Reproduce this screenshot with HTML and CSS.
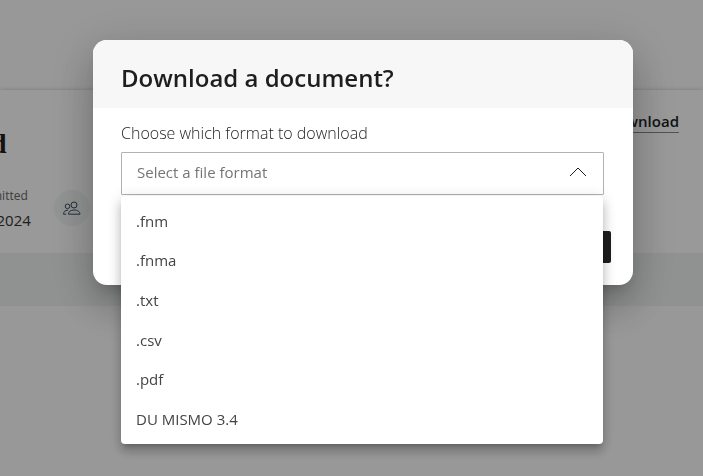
FILE: index.html
```html
<!DOCTYPE html>
<html lang="en">
<head>
<meta charset="UTF-8">
<meta name="viewport" content="width=device-width, initial-scale=1.0">
<title>Download a document</title>
<link rel="stylesheet" href="styles.css">
</head>
<body>
<main class="page">
  <section class="loan-card">
    <div class="loan-body">
      <div class="loan-info">
        <h1 class="loan-name">d</h1>
        <div class="loan-row">
          <div class="submitted">
            <span class="submitted-label">mitted</span>
            <span class="submitted-date">/2024</span>
          </div>
          <div class="people">
            <svg width="18" height="14" viewBox="0 0 18 14" fill="none" stroke="currentColor">
              <circle cx="11" cy="4" r="3"/>
              <circle cx="4.5" cy="5.3" r="2.3"/>
              <path d="M5.5 13.2c0-2.5 2-4.2 5.5-4.2s6 1.700 6 4.200zM.6 13.200c0-2.600 1.300-4 4.400-4M.6 13.200h2.600"/>
            </svg>
          </div>
        </div>
      </div>
      <a class="download-link" href="#">Download</a>
    </div>
    <div class="loan-footer"></div>
  </section>
</main>

<div class="overlay">
  <div class="modal" role="dialog" aria-labelledby="modalTitle">
    <div class="modal-header">
      <h2 id="modalTitle">Download a document?</h2>
    </div>
    <form class="modal-body">
      <label for="format">Choose which format to download</label>
      <div class="select-box">
        <select id="format">
          <option value="">Select a file format</option>
        </select>
        <svg class="chevron" width="18" height="10" viewBox="0 0 18 10" fill="none" stroke="currentColor">
          <path d="M1 9l8-8 8 8"/>
        </svg>
        <ul class="menu" role="listbox">
          <li role="option">.fnm</li>
          <li role="option">.fnma</li>
          <li role="option">.txt</li>
          <li role="option">.csv</li>
          <li role="option">.pdf</li>
          <li role="option">DU MISMO 3.4</li>
        </ul>
      </div>
    </form>
    <div class="modal-footer">
      <button type="button" aria-label="Download"></button>
    </div>
  </div>
</div>
</body>
</html>
```
FILE: styles.css
```css
* {
  box-sizing: border-box;
}

body {
  margin: 0;
  font-family: "Open Sans", sans-serif;
  font-size: 15px;
  color: #1e1e1e;
  background-color: #fdfdfd;
  overflow: hidden;
}

.page {
  padding-top: 90px;
}

.loan-card {
  background-color: #fff;
  box-shadow: 0 1px 5px rgba(0, 0, 0, 0.3);
}

.loan-body {
  display: flex;
  justify-content: space-between;
  align-items: flex-start;
  height: 163px;
  padding: 20px 24px 0 0;
}

.loan-info {
  margin-left: -9px;
}

.loan-name {
  margin: 16px 0 24px;
  font-family: "Liberation Serif", serif;
  font-size: 28px;
  line-height: 36px;
}

.loan-row {
  display: flex;
  align-items: center;
  gap: 23px;
}

.submitted {
  display: flex;
  flex-direction: column;
  gap: 4px;
}

.submitted-label {
  font-size: 12px;
  line-height: 20px;
  color: #666;
}

.submitted-date {
  line-height: 20px;
  color: #333;
}

.people {
  display: flex;
  justify-content: center;
  align-items: center;
  width: 36px;
  height: 36px;
  border-radius: 50%;
  background-color: #f3f7f6;
  color: #3c4a66;
}

.download-link {
  border-bottom: 1px solid #888;
  font-weight: 600;
  line-height: 22px;
  color: #1e1e1e;
  text-decoration: none;
}

.loan-footer {
  height: 53px;
  background-color: #f0f4f3;
}

.overlay {
  position: fixed;
  inset: 0;
  display: flex;
  justify-content: center;
  align-items: flex-start;
  padding: 40px 0 0 23px;
  background-color: rgba(0, 0, 0, 0.4);
}

.modal {
  width: 540px;
  border-radius: 14px;
  background-color: #fff;
  box-shadow: 0 11px 15px -7px rgba(0, 0, 0, 0.2), 0 24px 38px 3px rgba(0, 0, 0, 0.14), 0 9px 46px 8px rgba(0, 0, 0, 0.12);
}

.modal-header {
  padding: 22px 28px 14px;
  border-radius: 14px 14px 0 0;
  background-color: #f7f7f7;
}

.modal-header h2 {
  margin: 0;
  font-size: 24px;
  font-weight: 600;
  line-height: 32px;
}

.modal-body {
  padding: 15px 29px 0 28px;
}

.modal-body label {
  display: block;
  margin-bottom: 9px;
  font-size: 16px;
  font-weight: 300;
  line-height: 20px;
}

.select-box {
  position: relative;
}

.select-box select {
  display: block;
  width: 100%;
  height: 43px;
  padding: 0 15px 4px;
  appearance: none;
  border: 1px solid #b2b2b2;
  border-radius: 1px;
  background-color: #fff;
  font: inherit;
  color: #757575;
}

.chevron {
  position: absolute;
  top: 15px;
  right: 17px;
}

.menu {
  position: absolute;
  top: 44px;
  left: 0;
  right: 1px;
  display: grid;
  grid-auto-rows: 1fr;
  height: 248px;
  margin: 0;
  padding: 5px 0;
  border-radius: 4px;
  background-color: #fff;
  box-shadow: 0 5px 5px -3px rgba(0, 0, 0, 0.2), 0 8px 10px 1px rgba(0, 0, 0, 0.14), 0 3px 14px 2px rgba(0, 0, 0, 0.12);
  list-style: none;
}

.menu li {
  display: flex;
  align-items: center;
  padding: 0 15px;
  color: #444;
}

.modal-footer {
  display: flex;
  justify-content: flex-end;
  padding: 36px 22px 22px;
}

.modal-footer button {
  width: 120px;
  height: 32px;
  border: none;
  border-radius: 2px;
  background-color: #1e1e1e;
}
```
